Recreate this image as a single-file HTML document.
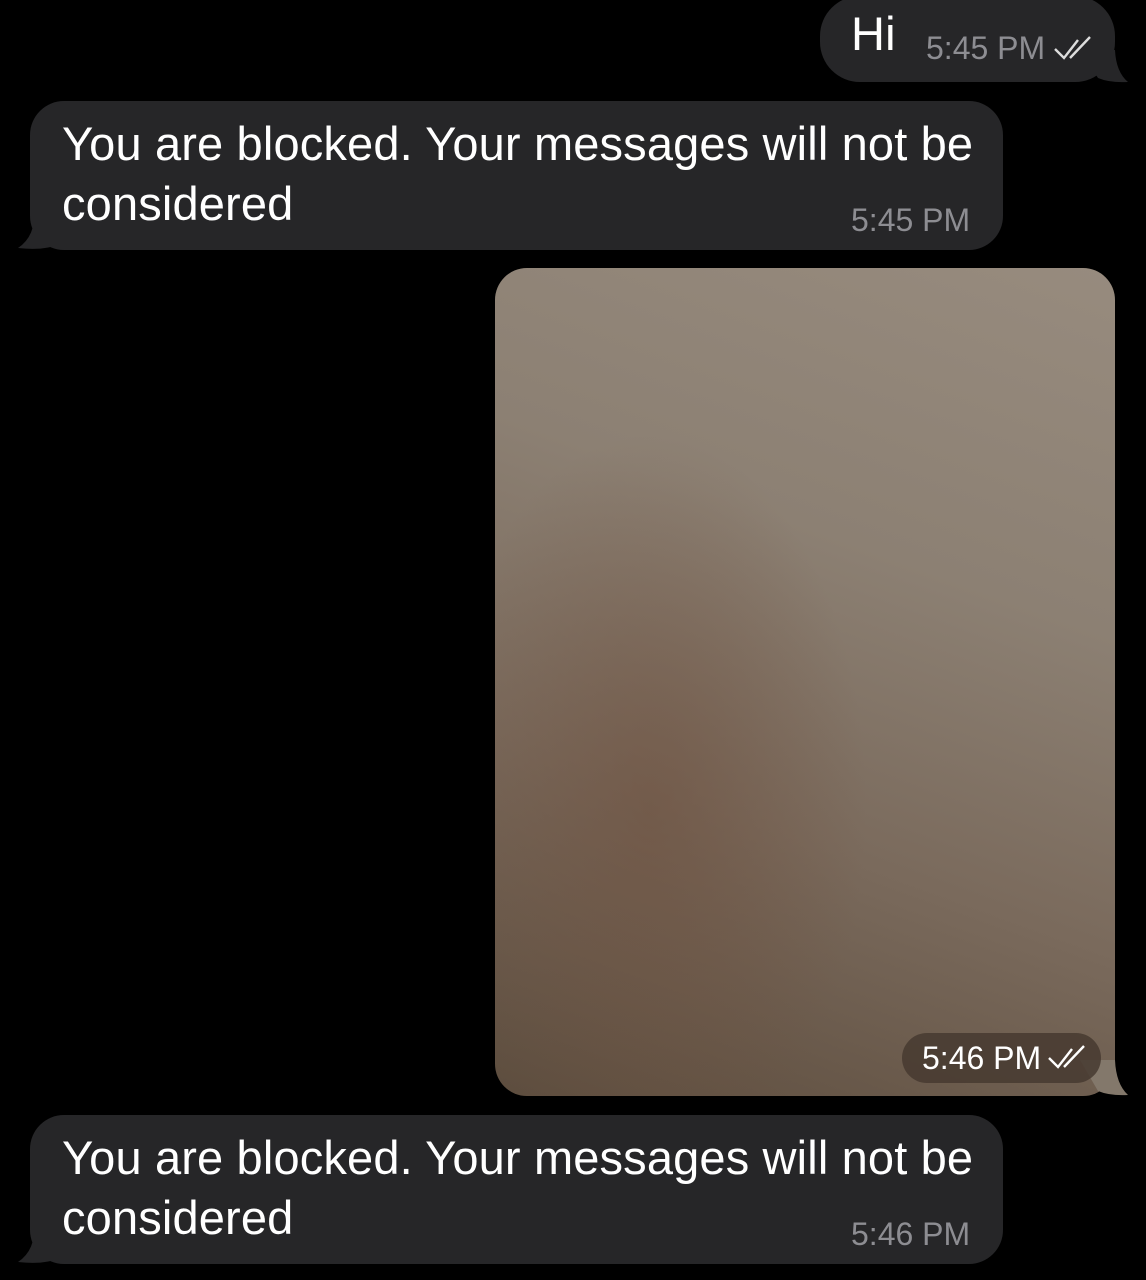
<!DOCTYPE html>
<html><head><style>
body{margin:0;width:1146px;height:1280px;background:#000;position:relative;overflow:hidden;font-family:"Liberation Sans",sans-serif}
.b{position:absolute;background:#262628;border-radius:34px}
.t{position:absolute;color:#fff;font-size:47px;line-height:60px;white-space:nowrap;letter-spacing:0.15px}
.tm{position:absolute;color:#8d8d92;font-size:32px;white-space:nowrap}
svg{position:absolute}
</style></head><body>
<!-- Hi bubble -->
<div class="b" style="left:820px;top:-4px;width:295px;height:86px;border-radius:40px"></div>
<svg style="left:1080px;top:50px" width="50" height="35"><path d="M0 0 L35 0 Q36 22 48 32 Q30 33 18 28 Z" fill="#262628"/></svg>
<div class="t" style="left:851px;top:4px">Hi</div>
<div class="tm" style="left:926px;top:30px">5:45 PM</div>
<svg style="left:1052px;top:34px" width="42" height="28"><path d="M3 15 L12 24 L26 6 M18 24 L38 3" stroke="#ddd" stroke-width="2.4" fill="none"/></svg>

<!-- bubble 2 -->
<div class="b" style="left:30px;top:101px;width:973px;height:149px"></div>
<svg style="left:16px;top:210px" width="50" height="42"><path d="M50 0 L18 0 Q20 26 2 38 Q28 41 44 34 Z" fill="#262628"/></svg>
<div class="t" style="left:62px;top:114px">You are blocked. Your messages will not be<br>considered</div>
<div class="tm" style="left:851px;top:202px">5:45 PM</div>

<!-- image -->
<div style="position:absolute;left:495px;top:268px;width:620px;height:828px;border-radius:32px;background:radial-gradient(ellipse 35% 45% at 25% 65%,rgba(110,80,62,.55),rgba(110,80,62,0)),linear-gradient(200deg,#978b7e 0%,#8c8073 35%,#7a6a5c 65%,#5d4d3e 100%)"></div>
<svg style="left:1080px;top:1060px" width="50" height="38"><path d="M0 0 L35 0 Q36 24 48 35 Q30 36 18 31 Z" fill="#83786b"/></svg>
<div style="position:absolute;left:902px;top:1033px;width:199px;height:50px;border-radius:25px;background:rgba(70,58,48,.85)"></div>
<div class="tm" style="left:922px;top:1040px;color:#fff">5:46 PM</div>
<svg style="left:1046px;top:1043px" width="42" height="28"><path d="M3 15 L12 24 L26 6 M18 24 L38 3" stroke="#fff" stroke-width="2.4" fill="none"/></svg>

<!-- bubble 3 -->
<div class="b" style="left:30px;top:1115px;width:973px;height:149px"></div>
<svg style="left:16px;top:1224px" width="50" height="42"><path d="M50 0 L18 0 Q20 26 2 38 Q28 41 44 34 Z" fill="#262628"/></svg>
<div class="t" style="left:62px;top:1128px">You are blocked. Your messages will not be<br>considered</div>
<div class="tm" style="left:851px;top:1216px">5:46 PM</div>
</body></html>
